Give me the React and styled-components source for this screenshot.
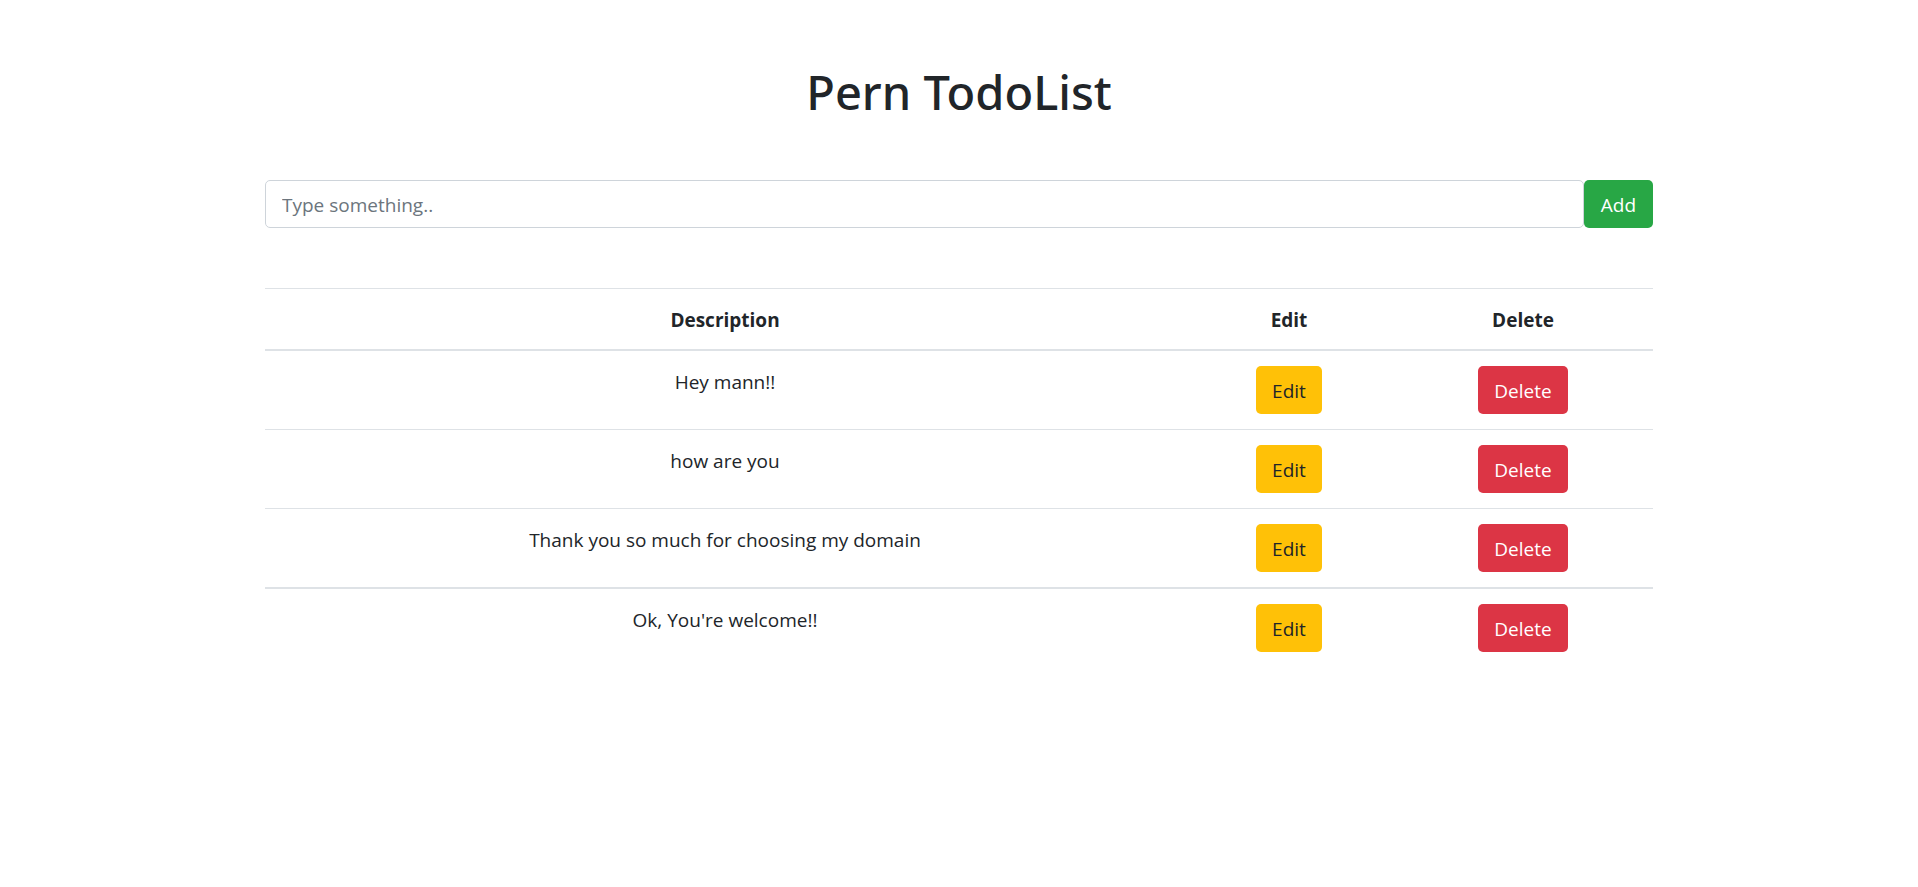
import React, { useState } from "react";
import styled, { createGlobalStyle } from "styled-components";

const GlobalStyle = createGlobalStyle`
  *, *::before, *::after { box-sizing: border-box; }
  body {
    margin: 0;
    background: #fff;
    color: #212529;
    font-family: "Open Sans", "Noto Sans", sans-serif;
    font-size: 19px;
    line-height: 30px;
  }
`;

const Container = styled.main`
  width: 100%;
  max-width: 1428px;
  margin: 0 auto;
  padding: 0 20px;
`;

const Title = styled.h1`
  margin: 62px 0 0;
  font-family: "Noto Sans", "Open Sans", sans-serif;
  font-size: 47px;
  line-height: 60px;
  font-weight: 500;
  text-align: center;
`;

const Form = styled.form`
  display: flex;
  margin: 58px 0 60px;
`;

const Input = styled.input`
  flex: 1;
  min-width: 0;
  height: 48px;
  padding: 9px 16px 7px;
  border: 1px solid #ced4da;
  border-radius: 5px;
  color: #495057;
  font: inherit;
  &::placeholder { color: #6c757d; opacity: 1; }
`;

const colors = {
  success: ["#28a745", "#fff"],
  warning: ["#ffc107", "#212529"],
  danger: ["#dc3545", "#fff"],
};

const Button = styled.button`
  height: 48px;
  padding: 10px 16px 8px;
  border: 0;
  border-radius: 5px;
  background: ${(p) => colors[p.$tone][0]};
  color: ${(p) => colors[p.$tone][1]};
  font: inherit;
  cursor: pointer;
`;

const AddButton = styled(Button)`
  min-width: 69px;
`;

const Table = styled.table`
  width: 100%;
  border-collapse: collapse;
  text-align: center;
`;

const HeadCell = styled.th`
  width: ${(p) => p.$width};
  padding: 16px 15px 14px;
  border-top: 1px solid #dee2e6;
  border-bottom: 2px solid #dee2e6;
  font-weight: 700;
`;

const Row = styled.tr`
  border-top: 1px solid #dee2e6;
  &:last-child { border-top-width: 2px; }
`;

const Cell = styled.td`
  padding: 15px;
  vertical-align: top;
`;

const TextCell = styled(Cell)`
  padding-top: 16px;
`;

const initialTodos = [
  "Hey mann!!",
  "how are you",
  "Thank you so much for choosing my domain",
  "Ok, You're welcome!!",
];

export default function App() {
  const [todos, setTodos] = useState(initialTodos);
  const [text, setText] = useState("");

  const add = (e) => {
    e.preventDefault();
    if (text.trim()) setTodos([...todos, text]);
    setText("");
  };

  return (
    <>
      <GlobalStyle />
      <Container>
        <Title>Pern TodoList</Title>
        <Form onSubmit={add}>
          <Input
            type="text"
            aria-label="New todo"
            placeholder="Type something.."
            value={text}
            onChange={(e) => setText(e.target.value)}
          />
          <AddButton $tone="success">Add</AddButton>
        </Form>
        <Table>
          <thead>
            <tr>
              <HeadCell scope="col">Description</HeadCell>
              <HeadCell scope="col" $width="208px">Edit</HeadCell>
              <HeadCell scope="col" $width="260px">Delete</HeadCell>
            </tr>
          </thead>
          <tbody>
            {todos.map((todo, i) => (
              <Row key={i}>
                <TextCell>{todo}</TextCell>
                <Cell>
                  <Button type="button" $tone="warning">Edit</Button>
                </Cell>
                <Cell>
                  <Button
                    type="button"
                    $tone="danger"
                    onClick={() => setTodos(todos.filter((_, n) => n !== i))}
                  >
                    Delete
                  </Button>
                </Cell>
              </Row>
            ))}
          </tbody>
        </Table>
      </Container>
    </>
  );
}
